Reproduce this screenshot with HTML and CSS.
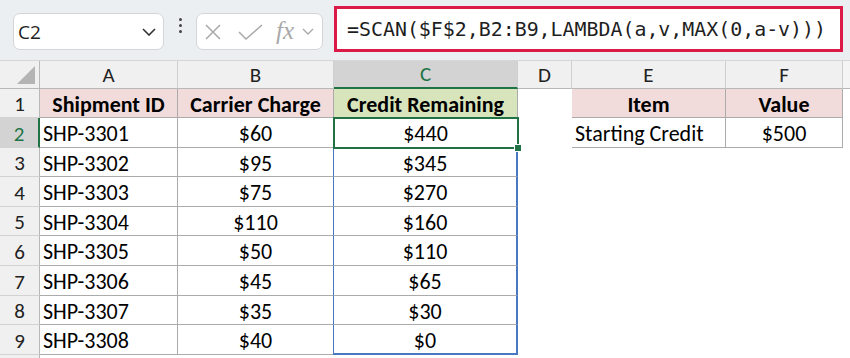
FILE: index.html
```html
<!DOCTYPE html>
<html>
<head>
<meta charset="utf-8">
<link rel="stylesheet" href="styles.css">
</head>
<body>
<div class="app">
  <div class="toolbar">
    <div class="namebox">
      <span class="name">C2</span>
      <svg class="chev" width="14" height="8" viewBox="0 0 14 8"><polyline points="1,1 7,7 13,1" fill="none" stroke="#333" stroke-width="1.6"/></svg>
    </div>
    <div class="dots"><i></i><i></i><i></i></div>
    <div class="fxbox">
      <svg class="ic-x" width="16" height="16" viewBox="0 0 16 16"><path d="M1 1 L15 15 M15 1 L1 15" stroke="#a9a9a9" stroke-width="1.5" fill="none"/></svg>
      <svg class="ic-ok" width="25" height="16" viewBox="0 0 25 16"><polyline points="1,8 8,15 24,1" stroke="#a9a9a9" stroke-width="1.5" fill="none"/></svg>
      <span class="fx">fx</span>
      <svg class="ic-dd" width="12" height="7" viewBox="0 0 12 7"><polyline points="1,1 6,6 11,1" fill="none" stroke="#a9a9a9" stroke-width="1.4"/></svg>
    </div>
    <div class="formula">=SCAN($F$2,B2:B9,LAMBDA(a,v,MAX(0,a-v)))</div>
  </div>
  <div class="grid">
    <div class="corner"><span class="tri"></span></div>
    <div class="ch">A</div>
    <div class="ch">B</div>
    <div class="ch ch-sel">C</div>
    <div class="ch">D</div>
    <div class="ch">E</div>
    <div class="ch">F</div>
    <div class="ch ch-end"></div>

    <div class="rh">1</div>
    <div class="c hdr">Shipment ID</div>
    <div class="c hdr">Carrier Charge</div>
    <div class="c hdr-g">Credit Remaining</div>
    <div class="e"></div>
    <div class="c hdr">Item</div>
    <div class="c hdr">Value</div>
    <div class="e"></div>

    <div class="rh rh-sel">2</div>
    <div class="c l">SHP-3301</div>
    <div class="c">$60</div>
    <div class="c sel">$440<span class="handle"></span></div>
    <div class="e"></div>
    <div class="c l">Starting Credit</div>
    <div class="c">$500</div>
    <div class="e"></div>

    <div class="rh">3</div>
    <div class="c l">SHP-3302</div>
    <div class="c">$95</div>
    <div class="c sp">$345</div>
    <div class="e"></div><div class="e"></div><div class="e"></div><div class="e"></div>

    <div class="rh">4</div>
    <div class="c l">SHP-3303</div>
    <div class="c">$75</div>
    <div class="c sp">$270</div>
    <div class="e"></div><div class="e"></div><div class="e"></div><div class="e"></div>

    <div class="rh">5</div>
    <div class="c l">SHP-3304</div>
    <div class="c">$110</div>
    <div class="c sp">$160</div>
    <div class="e"></div><div class="e"></div><div class="e"></div><div class="e"></div>

    <div class="rh">6</div>
    <div class="c l">SHP-3305</div>
    <div class="c">$50</div>
    <div class="c sp">$110</div>
    <div class="e"></div><div class="e"></div><div class="e"></div><div class="e"></div>

    <div class="rh">7</div>
    <div class="c l">SHP-3306</div>
    <div class="c">$45</div>
    <div class="c sp">$65</div>
    <div class="e"></div><div class="e"></div><div class="e"></div><div class="e"></div>

    <div class="rh">8</div>
    <div class="c l">SHP-3307</div>
    <div class="c">$35</div>
    <div class="c sp">$30</div>
    <div class="e"></div><div class="e"></div><div class="e"></div><div class="e"></div>

    <div class="rh">9</div>
    <div class="c l">SHP-3308</div>
    <div class="c">$40</div>
    <div class="c sp last">$0</div>
    <div class="e"></div><div class="e"></div><div class="e"></div><div class="e"></div>

    <div class="rh"></div>
  </div>
</div>
</body>
</html>
```

FILE: styles.css
```css
* { box-sizing: border-box; }
html, body { margin: 0; padding: 0; }
body {
  width: 850px;
  height: 358px;
  overflow: hidden;
  background: #ffffff;
  font-family: "Carlito", "Lato", sans-serif;
}
.app { width: 850px; }

.toolbar {
  height: 61px;
  background: #eceff2;
  display: flex;
  align-items: flex-start;
  border-bottom: 1px solid #d6d6d6;
}
.namebox {
  margin: 13px 0 0 13px;
  width: 151px;
  height: 37px;
  background: #fff;
  border: 1px solid #d3d6d9;
  border-radius: 7px;
  display: flex;
  align-items: center;
  justify-content: space-between;
  padding: 0 7px 0 4px;
}
.name {
  font-family: "Open Sans", "Liberation Sans", sans-serif;
  font-size: 19px;
  color: #222;
}
.dots {
  width: 32px;
  height: 50px;
  display: flex;
  flex-direction: column;
  align-items: center;
  justify-content: center;
  gap: 3px;
}
.dots i {
  display: block;
  width: 3px;
  height: 3px;
  border-radius: 50%;
  background: #444;
}
.fxbox {
  margin-top: 13px;
  width: 127px;
  height: 37px;
  background: #fff;
  border: 1px solid #d3d6d9;
  border-radius: 7px;
  display: flex;
  align-items: center;
  padding: 0 0 0 8px;
}
.ic-ok { margin-left: 17px; }
.fx {
  font-family: "Liberation Serif", serif;
  font-style: italic;
  font-size: 25px;
  line-height: 1;
  color: #a9a9a9;
  margin-left: 13px;
  margin-bottom: 3px;
}
.ic-dd { margin-left: 8px; }
.formula {
  margin: 6px 0 0 11px;
  width: 509px;
  height: 46px;
  border: 3px solid #dc1a48;
  background: #fff;
  font-family: "DejaVu Sans Mono", monospace;
  font-size: 19.9px;
  color: #1e1e1e;
  display: flex;
  align-items: center;
  padding-left: 10px;
  padding-top: 1px;
  white-space: nowrap;
}

.grid {
  display: grid;
  grid-template-columns: 40px 138px 156px 184px 54px 154px 117px 7px;
  grid-template-rows: 28px 29px 30px 29px 30px 29px 30px 30px 29px 30px 10px;
}
.corner {
  background: #f0f0f0;
  border-right: 1px solid #b8b8b8;
  border-bottom: 1px solid #b8b8b8;
  position: relative;
}
.tri {
  position: absolute;
  right: 4px;
  bottom: 4px;
  width: 0;
  height: 0;
  border-left: 18px solid transparent;
  border-bottom: 18px solid #b4b4b4;
}
.ch {
  background: #f0f0f0;
  border-right: 1px solid #cfcfcf;
  border-bottom: 1px solid #b8b8b8;
  display: flex;
  align-items: center;
  justify-content: center;
  font-size: 21px;
  color: #222;
}
.ch-sel {
  background: #d3d3d3;
  color: #217346;
  border-bottom: 2px solid #217346;
}
.ch-end { border-right: none; background: #f4f4f4; }
.rh {
  background: #f0f0f0;
  border-right: 1px solid #b8b8b8;
  border-bottom: 1px solid #d2d2d2;
  display: flex;
  align-items: center;
  justify-content: center;
  font-size: 21px;
  padding-top: 2px;
  color: #222;
}
.rh-sel {
  background: #d3d3d3;
  color: #217346;
  border-right: 2px solid #217346;
}
.c {
  border-right: 1px solid #ababab;
  border-bottom: 1px solid #ababab;
  display: flex;
  align-items: center;
  justify-content: center;
  font-size: 22px;
  padding-top: 2px;
  color: #000;
  white-space: nowrap;
  position: relative;
}
.c.l { justify-content: flex-start; padding-left: 3px; }
.hdr { background: #f2dcdb; font-weight: bold; }
.hdr-g {
  background: #d8e4bc;
  font-weight: bold;
}
.sel {
  outline: 2px solid #217346;
  outline-offset: -1px;
  z-index: 2;
}
.handle {
  position: absolute;
  right: -5px;
  bottom: -5px;
  width: 8px;
  height: 8px;
  background: #217346;
  border: 1px solid #fff;
}
.sp {
  border-left: 1px solid #4a78c0;
  border-right: 2px solid #4a78c0;
  margin-left: -1px;
}
.sp.last { border-bottom: 2px solid #4a78c0; }
```
